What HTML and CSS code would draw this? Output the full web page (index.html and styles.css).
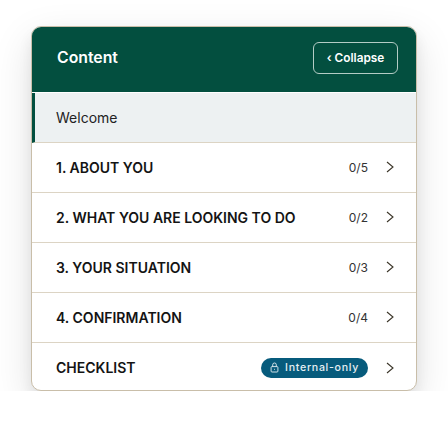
FILE: index.html
```html
<!DOCTYPE html>
<html lang="en">

<head>
  <meta charset="UTF-8">
  <meta name="viewport" content="width=device-width, initial-scale=1.0">
  <title>Content</title>
  <link rel="stylesheet" href="styles.css">
</head>

<body>

  <div class="card">
    <!-- Header -->
    <div class="card-header">
      <div class="card-title">Content</div>
      <button class="collapse-btn"><span class="collapse-arrow">&lsaquo;</span> Collapse</button>
    </div>

    <!-- Rows -->
    <div class="row active">
      <span class="row-welcome">Welcome</span>
    </div>
    <div class="row">
      <span class="row-title">1. ABOUT YOU</span>
      <span class="row-count">0/5</span>
      <svg class="chevron" viewBox="0 0 8 12"><path d="M1 1l6 5-6 5"/></svg>
    </div>
    <div class="row">
      <span class="row-title">2. WHAT YOU ARE LOOKING TO DO</span>
      <span class="row-count">0/2</span>
      <svg class="chevron" viewBox="0 0 8 12"><path d="M1 1l6 5-6 5"/></svg>
    </div>
    <div class="row">
      <span class="row-title">3. YOUR SITUATION</span>
      <span class="row-count">0/3</span>
      <svg class="chevron" viewBox="0 0 8 12"><path d="M1 1l6 5-6 5"/></svg>
    </div>
    <div class="row">
      <span class="row-title">4. CONFIRMATION</span>
      <span class="row-count">0/4</span>
      <svg class="chevron" viewBox="0 0 8 12"><path d="M1 1l6 5-6 5"/></svg>
    </div>
    <div class="row">
      <span class="row-title">CHECKLIST</span>
      <span class="badge">
        <svg class="lock" viewBox="0 0 10 12">
          <rect x="1.2" y="5" width="7.6" height="6" rx="1"/>
          <path d="M3 5V3a2 2 0 0 1 4 0v2"/>
          <path d="M5 7.5v1"/>
        </svg>
        Internal-only
      </span>
      <svg class="chevron" viewBox="0 0 8 12"><path d="M1 1l6 5-6 5"/></svg>
    </div>
  </div>

</body>

</html>
```

FILE: styles.css
```css
body {
  margin: 0;
  background: #fff;
  font-family: Inter, "Liberation Sans", sans-serif;
}

/* Card */
.card {
  box-sizing: border-box;
  width: 386px;
  margin: 26px 0 0 31px;
  background: #fff;
  border: 1px solid #c9bea9;
  border-radius: 10px;
  overflow: hidden;
  box-shadow: 0 8px 14px rgba(0, 0, 0, 0.07), 0 14px 40px rgba(0, 0, 0, 0.12);
}

/* Header */
.card-header {
  display: flex;
  align-items: center;
  justify-content: space-between;
  height: 65px;
  padding: 0 18px 4px 25px;
  box-sizing: border-box;
  background: #034f3f;
  margin-bottom: 1px;
}

.card-title {
  font-size: 15.8px;
  font-weight: 600;
  color: #fff;
}

.collapse-btn {
  box-sizing: border-box;
  width: 85px;
  height: 32px;
  padding: 0;
  background: transparent;
  border: 1px solid #b4ccc5;
  border-radius: 6px;
  color: #fff;
  font-family: inherit;
  font-size: 11.8px;
  font-weight: 600;
}

/* Rows */
.row {
  display: flex;
  align-items: center;
  box-sizing: border-box;
  height: 50px;
  padding: 0 22px 1px 24px;
  border-bottom: 1px solid #dcd4c4;
}

.row:last-child {
  border-bottom: none;
  height: 47px;
  padding-top: 2px;
  padding-bottom: 0;
}

.row.active {
  background: #edf1f2;
  border-left: 3px solid #034f3f;
  padding-left: 21px;
}

.row-welcome {
  font-size: 14px;
  color: #222;
}

.row-title {
  flex: 1;
  font-size: 14px;
  font-weight: 600;
  color: #141414;
}

.row-count {
  font-size: 12px;
  color: #333;
}

.chevron {
  width: 8px;
  height: 12px;
  margin-left: 18px;
  fill: none;
  stroke: #3b3528;
  stroke-width: 1.1;
}

/* Badge */
.badge {
  display: flex;
  align-items: center;
  gap: 6px;
  height: 20px;
  padding: 0 9px;
  border-radius: 10px;
  background: #075b7c;
  color: #e6eff3;
  font-size: 10.6px;
  font-weight: 500;
  letter-spacing: 0.7px;
}

.lock {
  width: 9px;
  height: 11px;
  fill: none;
  stroke: #e6eff3;
  stroke-width: 1;
}
```
